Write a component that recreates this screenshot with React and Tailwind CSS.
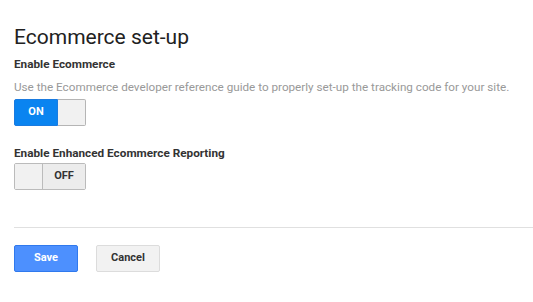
export default function App() {
  return (
    <div className="w-[533px] h-[302px] bg-white pl-[14px] pt-[25px] font-['Roboto',sans-serif]">
      <h1 className="text-[21px] leading-[24px] text-[#212121] font-normal">Ecommerce set-up</h1>
      <div className="mt-[7px] text-[11.75px] leading-[16px] font-bold text-[#333]">Enable Ecommerce</div>
      <div className="mt-[7px] text-[11.7px] leading-[16px] text-[#999]">Use the Ecommerce developer reference guide to properly set-up the tracking code for your site.</div>
      <div className="mt-[4px] flex w-[72px] h-[27px]">
        <div className="w-[44px] rounded-l-[2px] bg-[#0a84f0] border border-[#1a7be0] text-white text-[11px] font-bold flex items-center justify-center">ON</div>
        <div className="flex-1 rounded-r-[2px] bg-[#f1f1f1] border border-l-0 border-[#b5b5b5]"></div>
      </div>
      <div className="mt-[19px] text-[11.75px] leading-[16px] font-bold text-[#333]">Enable Enhanced Ecommerce Reporting</div>
      <div className="mt-[2px] flex w-[72px] h-[27px] rounded-[2px] border border-[#bbb] overflow-hidden">
        <div className="w-[28px] bg-[#f1f1f1] border-r border-[#bbb]"></div>
        <div className="flex-1 bg-[#ececec] text-[#333] text-[11px] font-bold flex items-center justify-center">OFF</div>
      </div>
      <div className="mt-[37px] h-px bg-[#e0e0e0]"></div>
      <div className="mt-[17px] flex gap-[18px]">
        <button className="w-[64px] h-[27px] rounded-[2px] bg-[#4d90fe] border border-[#3079ed] text-white text-[11px] font-bold">Save</button>
        <button className="w-[64px] h-[27px] rounded-[2px] bg-[#f2f2f2] border border-[#dcdcdc] text-[#333] text-[11px] font-bold">Cancel</button>
      </div>
    </div>
  );
}
